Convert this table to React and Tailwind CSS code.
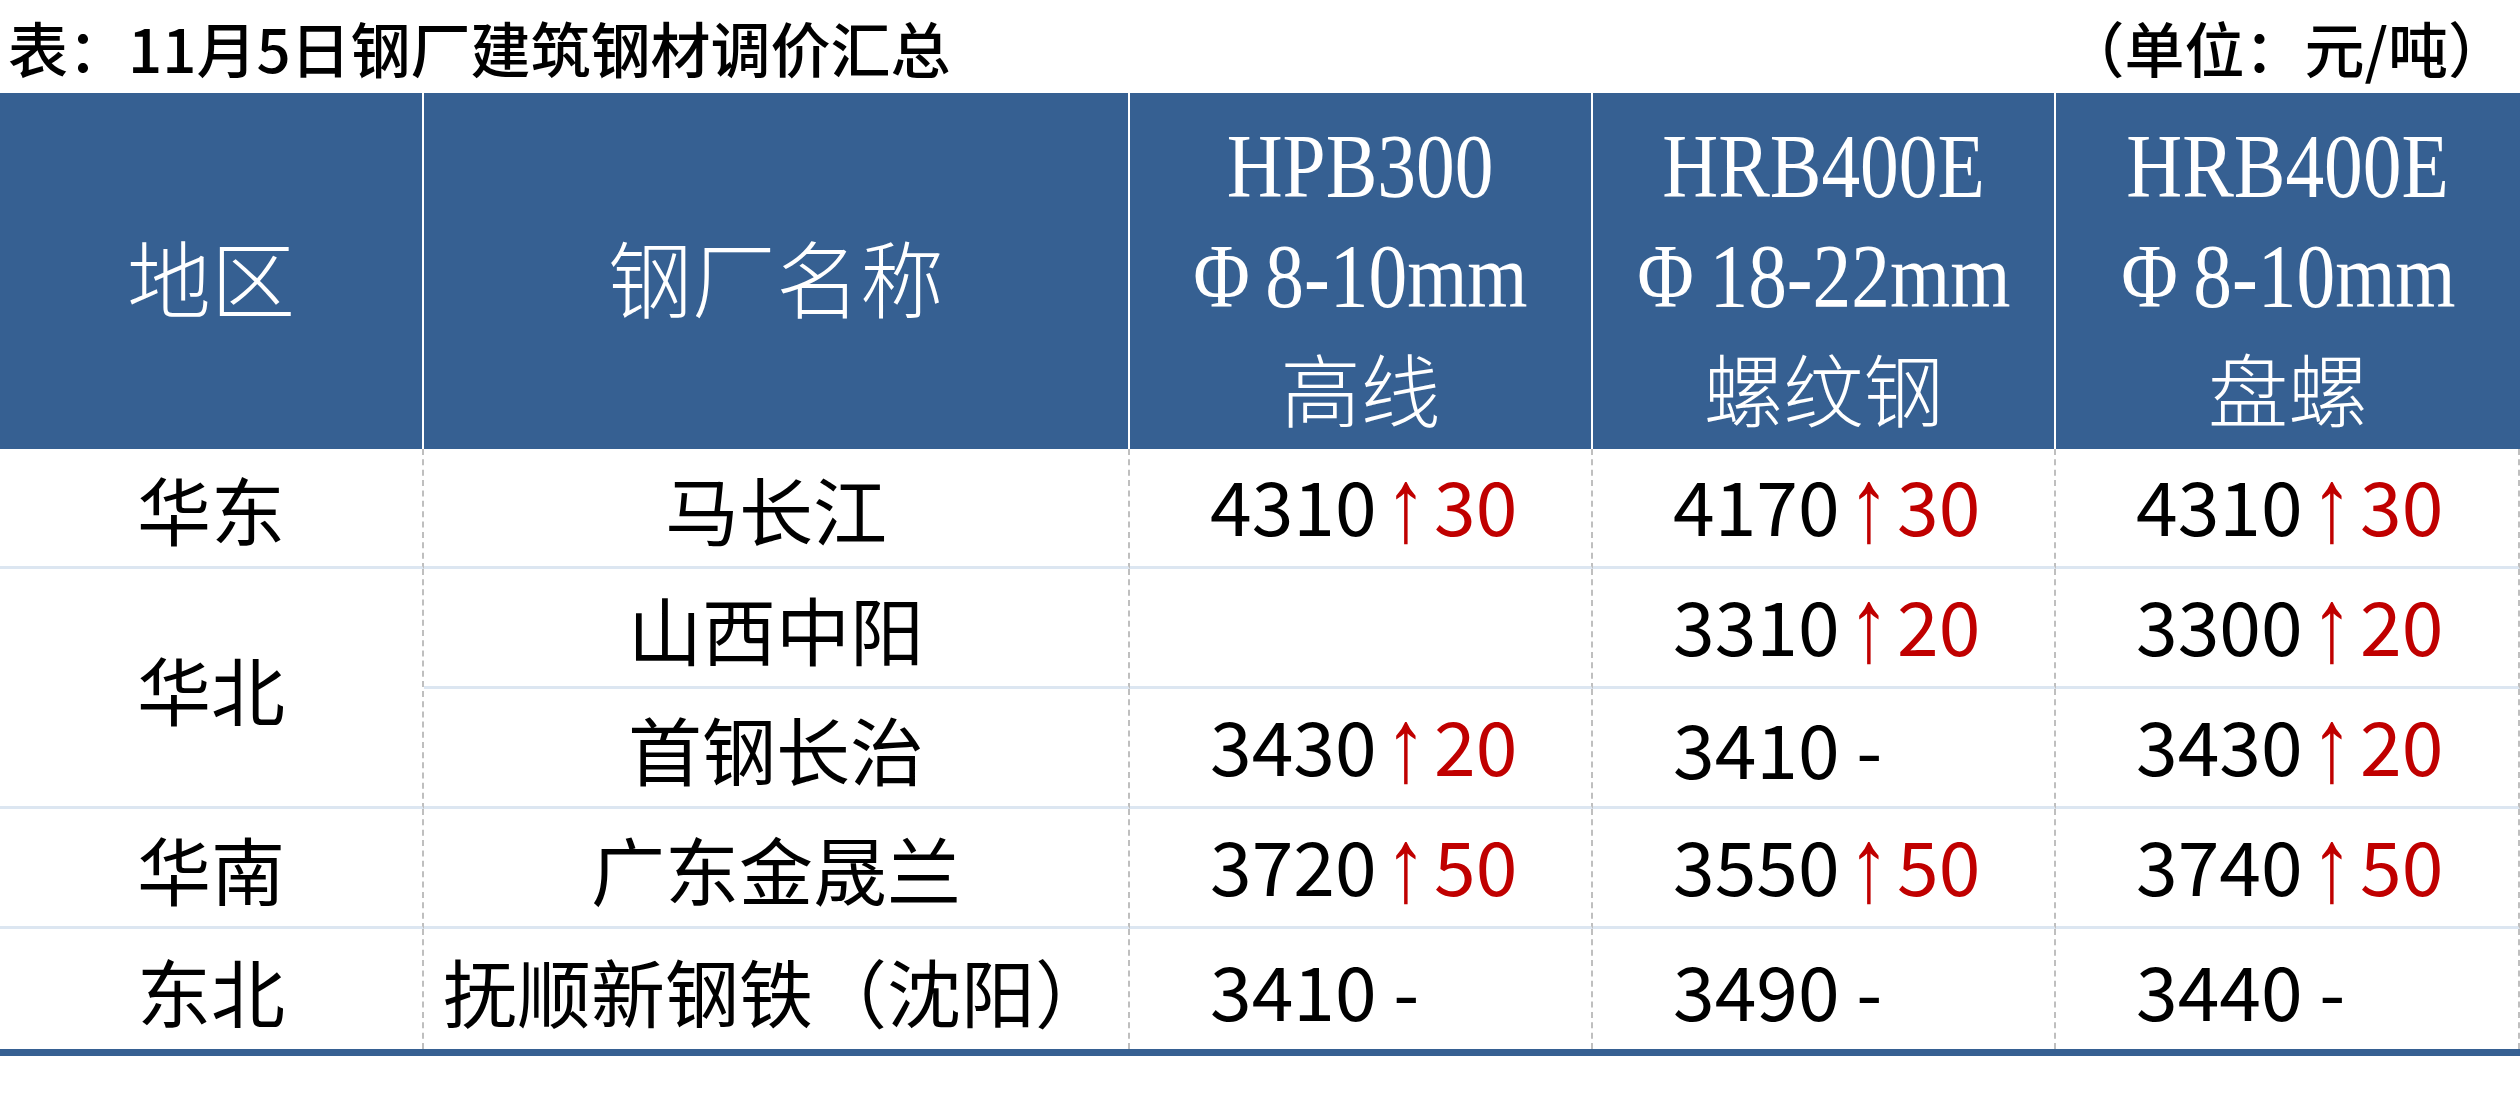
import React from 'react'

const rows = [
  { region: '华东', mill: '马长江', vals: [['4310', '30'], ['4170', '30'], ['4310', '30']] },
  { region: '华北', span: true, mill: '山西中阳', vals: [null, ['3310', '20'], ['3300', '20']] },
  { mill: '首钢长治', vals: [['3430', '20'], ['3410'], ['3430', '20']] },
  { region: '华南', mill: '广东金晟兰', vals: [['3720', '50'], ['3550', '50'], ['3740', '50']] },
  { region: '东北', mill: '抚顺新钢铁（沈阳）', vals: [['3410'], ['3490'], ['3440']], last: true },
]

const heads = [
  { grade: 'HPB300', spec: '8-10mm', name: '高线' },
  { grade: 'HRB400E', spec: '18-22mm', name: '螺纹钢' },
  { grade: 'HRB400E', spec: '8-10mm', name: '盘螺' },
]

const Price = ({ v }) => {
  if (!v) return null
  return (
    <span>
      {v[0]}
      {v[1] ? (
        <span className='text-[#c00000]'>
          <span className="inline-block font-['Liberation_Sans',sans-serif] mx-[10px] scale-y-[1.4] scale-x-[1.1] -translate-y-[5px]">↑</span>
          {v[1]}
        </span>
      ) : (
        <span> -</span>
      )}
    </span>
  )
}

const App = () => {
  const cell = 'h-[120px] flex items-center border-r-2 border-r-[#bfbfbf] [border-right-style:dashed]'
  return (
    <div className="w-[2520px] h-[1113px] bg-white text-black font-['Noto_Sans_CJK_SC','Noto_Sans',sans-serif]">
      <div className='h-[93px] flex items-center justify-between pl-[8px] pr-[12px] text-[60px] font-medium leading-none'>
        <span>表：11月5日钢厂建筑钢材调价汇总</span>
        <span>（单位：元/吨）</span>
      </div>

      <div className='grid grid-cols-[424px_706px_463px_463px_464px] border-b-[7px] border-b-[#366092]'>
        {/* header */}
        <div className="h-[356px] bg-[#366092] text-white border-r-2 border-r-white flex items-center justify-center pt-[10px] text-[84px] font-light">
          地区
        </div>
        <div className="h-[356px] bg-[#366092] text-white border-r-2 border-r-white flex items-center justify-center pt-[10px] text-[84px] font-light">
          钢厂名称
        </div>
        {heads.map((h, i) => (
          <div
            key={i}
            className={`h-[356px] bg-[#366092] text-white flex flex-col items-center justify-center pt-[10px] ${i < 2 ? 'border-r-2 border-r-white' : ''}`}>
            <div className="h-[110px] flex items-center font-['Liberation_Serif',serif] text-[90px] scale-x-[0.86] whitespace-nowrap">
              {h.grade}
            </div>
            <div className="h-[110px] flex items-center font-['Liberation_Serif',serif] text-[90px] scale-x-[0.86] whitespace-nowrap">
              <span className='mr-[18px]'>Φ</span>
              {h.spec}
            </div>
            <div className='h-[110px] flex items-center text-[80px] font-light'>{h.name}</div>
          </div>
        ))}

        {/* body */}
        {rows.map((r, i) => {
          const line = r.last ? '' : 'border-b-[3px] border-b-[#dce6f1]'
          return (
            <React.Fragment key={i}>
              {r.region && (
                <div
                  className={`${cell} ${line} justify-center text-[74px] ${r.span ? 'row-span-2 h-[240px]' : ''}`}>
                  {r.region}
                </div>
              )}
              <div className={`${cell} ${line} justify-center text-[74px] whitespace-nowrap`}>{r.mill}</div>
              {r.vals.map((v, j) => (
                <div
                  key={j}
                  className={`${cell} ${line} pl-[80px] text-[75px] whitespace-nowrap ${j === 2 ? 'border-r-0' : ''}`}>
                  <Price v={v} />
                </div>
              ))}
            </React.Fragment>
          )
        })}
      </div>
    </div>
  )
}

export default App
